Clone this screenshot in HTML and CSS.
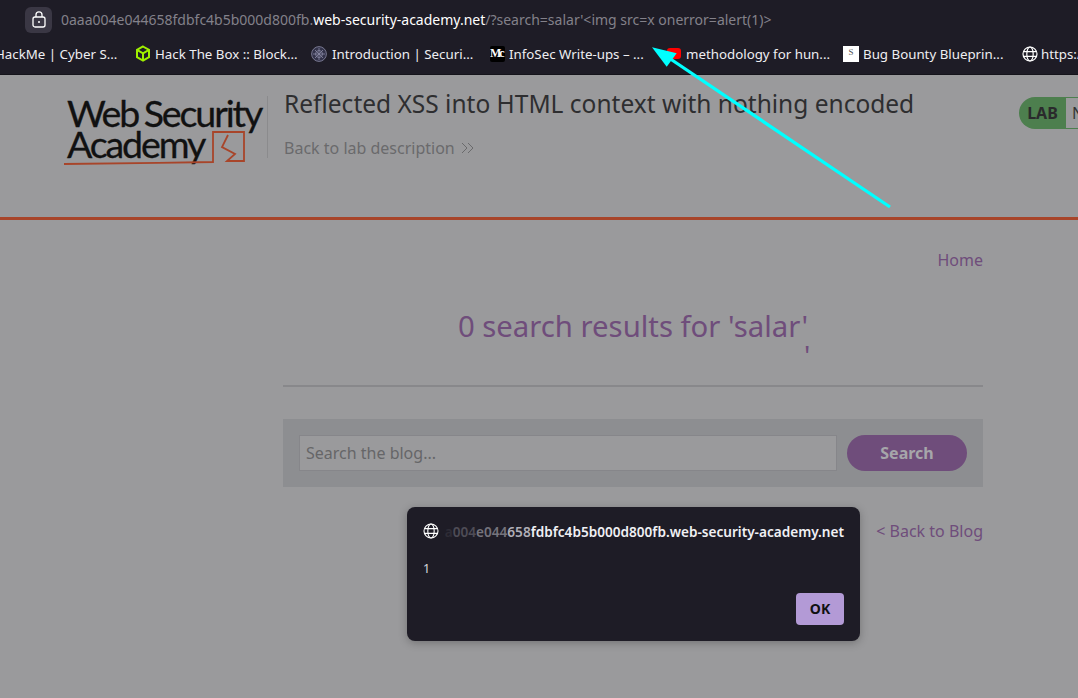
FILE: index.html
```html
<!DOCTYPE html>
<html lang="en">
<head>
<meta charset="utf-8">
<title>Reflected XSS into HTML context with nothing encoded</title>
<link rel="stylesheet" href="styles.css">
</head>
<body>
<div class="browser">
  <div class="urlbar">
    <span class="lock">
      <svg width="14" height="17" viewBox="0 0 14 17" fill="none" stroke="#fff" stroke-width="1.3"><rect x="1" y="6" width="12" height="10" rx="2"/><path d="M4 6V3.8a3 3 0 0 1 6 0V6"/><circle cx="7" cy="11" r="1" fill="#fff" stroke="none"/></svg>
    </span>
    <span class="url"><span class="dim">0aaa004e044658fdbfc4b5b000d800fb.</span>web-security-academy.net<span class="dim">/?search=salar'&lt;img src=x onerror=alert(1)&gt;</span></span>
  </div>
  <div class="bookmarks">
    <span class="bm bm-first">HackMe | Cyber S...</span>
    <span class="bm bm-htb">
      <svg width="16" height="17" viewBox="0 0 16 17" fill="none" stroke="#9fef00" stroke-width="2"><path d="M8 1.5l6 3.4v7.2l-6 3.4-6-3.4V4.9z"/><path d="M2 4.9l6 3.4 6-3.4M8 8.3v7.2"/></svg>
      Hack The Box :: Block...</span>
    <span class="bm bm-intro">
      <svg width="16" height="16" viewBox="0 0 16 16" fill="none" stroke="#8c8ca6" stroke-width=".8"><circle cx="8" cy="8" r="7.4" fill="#33334a"/><circle cx="8" cy="8" r="3.5"/><path d="M2 8h12M8 2v12M4 4l8 8M12 4l-8 8"/></svg>
      Introduction | Securi...</span>
    <span class="bm bm-medium"><span class="mk">M<span class="mk-c">c</span></span>InfoSec Write-ups – ...</span>
    <span class="bm bm-yt"><span class="yt"></span>methodology for hun...</span>
    <span class="bm bm-bug"><span class="bugicon">S</span>Bug Bounty Blueprin...</span>
    <span class="bm bm-https">
      <svg width="16" height="16" viewBox="0 0 16 16" fill="none" stroke="#fff" stroke-width="1.2"><circle cx="8" cy="8" r="7"/><ellipse cx="8" cy="8" rx="3.2" ry="7"/><path d="M1.4 5.6h13.2M1.4 10.4h13.2"/></svg>
      https://</span>
  </div>
</div>

<div class="page">
  <header class="lab-header">
    <div class="logo">
      <span class="logo-line">Web Security</span>
      <span class="logo-line">Academy</span>
      <svg class="logo-mark" width="182" height="36" viewBox="0 0 182 36" fill="none" stroke="#a8452a" stroke-width="1.8"><path d="M0 34C40 33 100 33 149 32V2H180V31H163L171 24L158 17L164 5"/></svg>
    </div>
    <div class="lab-title">
      <h2>Reflected XSS into HTML context with nothing encoded</h2>
      <a class="back-desc">Back to lab description
        <svg width="14" height="12" viewBox="0 0 14 12" fill="none" stroke="#6a6a6c" stroke-width="1"><path d="M1 1l5 5-5 5M7 1l5 5-5 5"/></svg>
      </a>
    </div>
    <div class="status"><span class="lab-pill">LAB</span><span class="not-solved">Not solved</span></div>
  </header>

  <main class="content">
    <nav class="home"><a>Home</a></nav>
    <h1>0 search results for 'salar'</h1>
    <div class="stray">'</div>
    <hr class="rule">
    <form class="search-box">
      <div class="search-input">Search the blog...</div>
      <div class="search-btn">Search</div>
    </form>
    <div class="back-blog"><a>&lt; Back to Blog</a></div>
  </main>
</div>

<svg class="arrow" width="260" height="175" viewBox="0 0 260 175">
  <path d="M238 163L17 14" stroke="#00ffff" stroke-width="3.2" fill="none"/>
  <path d="M0 3.3L24.7 9.3L14.7 22.7Z" fill="#00ffff"/>
</svg>

<div class="dialog">
  <div class="dialog-origin">
    <svg width="16" height="16" viewBox="0 0 16 16" fill="none" stroke="#fff" stroke-width="1.1"><circle cx="8" cy="8" r="7"/><ellipse cx="8" cy="8" rx="3.2" ry="7"/><path d="M1.400 5.600h13.200M1.400 10.400h13.200"/></svg>
    <span class="origin-text"><span class="fade1">a</span><span class="fade2">004</span><span class="fade3">e044</span><span class="fade4">658</span>fdbfc4b5b000d800fb.web-security-academy.net</span>
  </div>
  <div class="dialog-msg">1</div>
  <div class="dialog-actions"><span class="ok">OK</span></div>
</div>
</body>
</html>
```
FILE: styles.css
```css
* { box-sizing: border-box; }
html, body { margin: 0; height: 100%; overflow: hidden; }
body { position: relative; width: 1078px; height: 698px; font-family: "Noto Sans", sans-serif; background: #9a9a9c; display: flex; flex-direction: column; }

.browser { height: 75px; background: #1e1c26; border-bottom: 1px solid #15141b; flex: none; color: #fff; }
.urlbar { height: 33px; padding: 6px 0 0 25px; display: flex; align-items: center; gap: 9px; }
.lock { width: 27px; height: 26px; border-radius: 6px; background: #3a3744; display: flex; align-items: center; justify-content: center; }
.url { font-size: 14px; color: #fff; white-space: nowrap; }
.dim { color: #83818a; }

.bookmarks { height: 41px; position: relative; font-size: 13.3px; color: #eeeef2; display: flex; align-items: center; white-space: nowrap; overflow: hidden; }
.bm { display: flex; align-items: center; gap: 5px; flex: none; }
.bm-first { margin-left: -5px; width: 140px; }
.bm-htb { width: 176px; gap: 4px; }
.bm-intro { width: 179px; }
.bm-medium { width: 177px; gap: 4px; }
.bm-yt { width: 176px; }
.bm-bug { width: 179px; gap: 4px; }
.bm-https { gap: 3px; }
.mk { width: 15px; height: 16px; background: #000; border-radius: 2px; font: bold 12px "Liberation Serif", serif; color: #fff; display: flex; align-items: center; overflow: hidden; }
.mk-c { margin-left: -2px; }
.yt { width: 14px; height: 11px; background: #f00; border-radius: 3px; margin-top: -1px; }
.bugicon { width: 16px; height: 16px; background: #fff; color: #555; font: 9px "Liberation Serif", serif; text-align: center; line-height: 12px; }

.page { flex: 1; display: flex; flex-direction: column; }
.lab-header { height: 145px; border-bottom: 3px solid #a8452a; padding: 21px 0 0 65px; display: flex; align-items: flex-start; flex: none; position: relative; }
.logo { width: 203px; height: 62px; border-right: 1px solid #8b8b8d; position: relative; color: #111; font-family: Lato, sans-serif; font-size: 37.5px; letter-spacing: -2.1px; word-spacing: -2px; line-height: 31px; -webkit-text-stroke: .3px #111; display: flex; flex-direction: column; padding: 1px 0 0 2px; }
.logo-line { display: block; white-space: nowrap; }
.logo-mark { position: absolute; left: -1px; top: 34px; }
.lab-title { margin-left: 16px; margin-top: -8px; }
.lab-title h2 { margin: 0; font-size: 24.5px; font-weight: 400; line-height: 32px; color: #2e2e30; white-space: nowrap; }
.back-desc { display: flex; align-items: center; gap: 6px; margin-top: 17px; font-size: 16px; line-height: 22px; color: #6a6a6c; }
.status { position: absolute; left: 1019px; top: 22px; display: flex; height: 32px; white-space: nowrap; width: 59px; overflow: hidden; }
.lab-pill { width: 47px; height: 32px; flex: none; background: #4d7f4e; color: #2a2a2c; border-radius: 16px 0 0 16px; font-weight: 700; font-size: 16px; line-height: 32px; text-align: center; }
.not-solved { flex: none; border: 1px solid #4d7f4e; border-left: none; padding-left: 6px; line-height: 30px; font-size: 16px; color: #333; }

.content { margin-left: 283px; width: 700px; display: flex; flex-direction: column; }
.home { text-align: right; margin-top: 29px; font-size: 16px; line-height: 22px; color: #6f4d7b; }
h1 { margin: 36px 0 0; text-align: center; font-size: 29.3px; font-weight: 400; line-height: 38px; color: #6f4d7b; }
.stray { height: 20px; margin: 0; padding-left: 521px; font-size: 28px; line-height: 20px; color: #6f4d7b; }
.rule { width: 100%; height: 2px; margin: 20px 0 0; border: 0; background: #88888b; }
.search-box { margin: 32px 0 0; height: 68px; background: #8d8e91; padding: 16px; display: flex; gap: 10px; }
.search-input { width: 538px; height: 36px; background: #9a9a9c; border: 1px solid #86868a; padding-left: 6px; font-size: 16px; line-height: 34px; color: #666668; }
.search-btn { width: 120px; height: 36px; border-radius: 18px; background: #6f4d7b; color: #a6a6aa; font-size: 16px; font-weight: 700; line-height: 36px; text-align: center; }
.back-blog { margin-top: 33px; text-align: right; font-size: 16px; line-height: 22px; color: #6f4d7b; }

.arrow { position: absolute; left: 652px; top: 44px; }

.dialog { position: absolute; left: 407px; top: 507px; width: 453px; height: 134px; background: #1e1c26; border-radius: 8px; box-shadow: 0 2px 8px rgba(0,0,0,.25); color: #fff; padding: 16px; }
.dialog-origin { display: flex; align-items: center; justify-content: space-between; height: 16px; }
.origin-text { font-size: 13.6px; font-weight: 600; white-space: nowrap; color: #f0f0f4; }
.fade1 { color: #2e2c36; }
.fade2 { color: #4e4c56; }
.fade3 { color: #75737c; }
.fade4 { color: #b0aeb6; }
.dialog-msg { margin-top: 22px; font-size: 12.500px; line-height: 16px; color: #d8d8dc; }
.dialog-actions { display: flex; justify-content: flex-end; margin-top: 16px; }
.ok { width: 48px; height: 32px; background: #b39ad6; border-radius: 4px; color: #111; font-size: 14px; font-weight: 700; line-height: 32px; text-align: center; }
```
